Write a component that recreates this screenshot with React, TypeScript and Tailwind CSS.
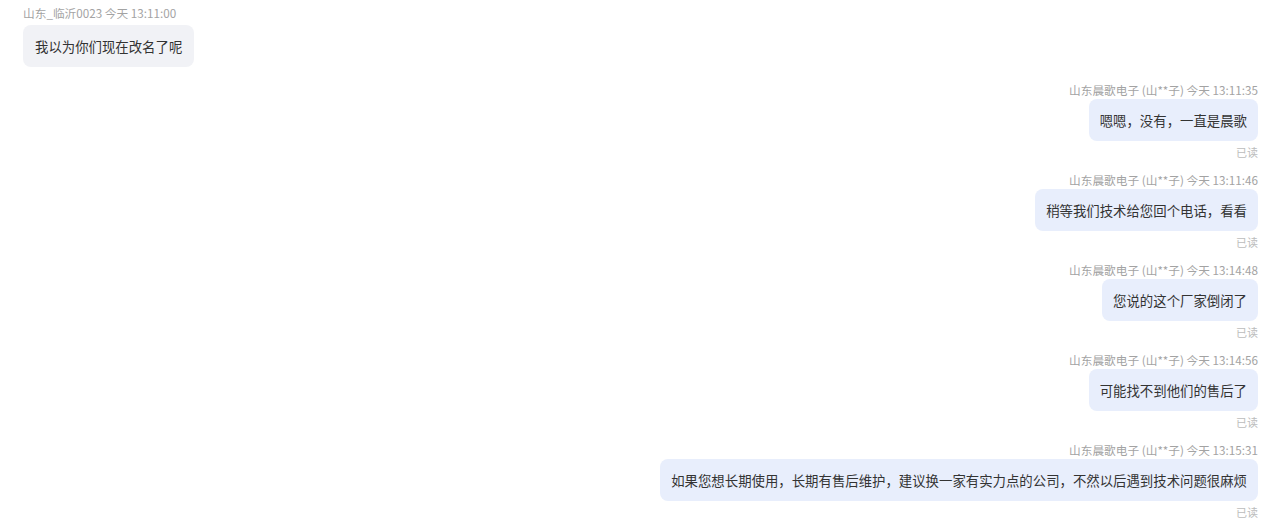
import React from "react";

type Message = {
  id: number;
  side: "left" | "right";
  sender: string;
  time: string;
  text: string;
  read?: boolean;
};

const messages: Message[] = [
  { id: 1, side: "left", sender: "山东_临沂0023", time: "今天 13:11:00", text: "我以为你们现在改名了呢" },
  { id: 2, side: "right", sender: "山东晨歌电子 (山**子)", time: "今天 13:11:35", text: "嗯嗯，没有，一直是晨歌", read: true },
  { id: 3, side: "right", sender: "山东晨歌电子 (山**子)", time: "今天 13:11:46", text: "稍等我们技术给您回个电话，看看", read: true },
  { id: 4, side: "right", sender: "山东晨歌电子 (山**子)", time: "今天 13:14:48", text: "您说的这个厂家倒闭了", read: true },
  { id: 5, side: "right", sender: "山东晨歌电子 (山**子)", time: "今天 13:14:56", text: "可能找不到他们的售后了", read: true },
  {
    id: 6,
    side: "right",
    sender: "山东晨歌电子 (山**子)",
    time: "今天 13:15:31",
    text: "如果您想长期使用，长期有售后维护，建议换一家有实力点的公司，不然以后遇到技术问题很麻烦",
    read: true,
  },
];

function LeftMessage({ msg }: { msg: Message }) {
  return (
    <div className="flex flex-col items-start pl-[23px] mb-[15px]">
      <div className="text-[11.7px] leading-4 text-[#a3a3a3] mb-[4px] whitespace-nowrap">
        {msg.sender} {msg.time}
      </div>
      <div className="h-[42px] flex items-center px-[12px] rounded-lg bg-[#f1f2f6] text-[13.4px] text-[#333333] whitespace-nowrap">
        {msg.text}
      </div>
    </div>
  );
}

function RightMessage({ msg }: { msg: Message }) {
  return (
    <div className="flex flex-col items-end pr-[10px] mb-[12px]">
      <div className="text-[11.7px] leading-4 text-[#a3a3a3] mb-px whitespace-nowrap">
        {msg.sender} {msg.time}
      </div>
      <div className="h-[42px] flex items-center px-[11px] rounded-lg bg-[#e8eefc] text-[13.4px] text-[#333333] whitespace-nowrap">
        {msg.text}
      </div>
      {msg.read && (
        <div className="mt-[3px] text-[11px] leading-4 text-[#bcbcbc]">已读</div>
      )}
    </div>
  );
}

export default function App() {
  return (
    <div
      className="w-[1268px] h-[527px] bg-white overflow-hidden pt-[5px]"
      style={{ fontFamily: '"Noto Sans CJK SC", "Noto Sans", sans-serif' }}
    >
      {messages.map((msg) =>
        msg.side === "left" ? (
          <LeftMessage key={msg.id} msg={msg} />
        ) : (
          <RightMessage key={msg.id} msg={msg} />
        )
      )}
    </div>
  );
}
